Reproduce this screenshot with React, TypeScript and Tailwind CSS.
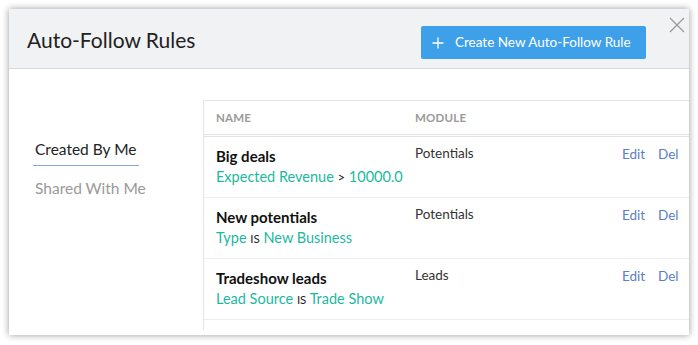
import React from "react";

const rows = [
  { name: "Big deals", field: "Expected Revenue", op: ">", value: "10000.0", module: "Potentials", opSmall: false },
  { name: "New potentials", field: "Type", op: "IS", value: "New Business", module: "Potentials", opSmall: true },
  { name: "Tradeshow leads", field: "Lead Source", op: "IS", value: "Trade Show", module: "Leads", opSmall: true },
];

export default function App() {
  return (
    <div className="w-[698px] h-[345px] bg-white overflow-hidden pt-[9px] pl-[9px]" style={{ fontFamily: "Lato, 'Open Sans', Arial, sans-serif" }}>
      <div className="w-[680px] h-[326px] bg-white shadow-[0_0_7px_rgba(0,0,0,0.4)] flex flex-col overflow-hidden">
        {/* Header */}
        <div className="h-[60px] shrink-0 bg-[#f1f2f4] border-b border-[#d9dadc] flex items-start relative">
          <div className="pl-[18px] pt-[17px] text-[21px] leading-[28px] text-[#222]">Auto-Follow Rules</div>
          <div className="ml-auto mr-[43px] mt-[17px] h-[33px] w-[225px] rounded-[2px] bg-[#3fa0ea] text-white flex items-center pl-[11px] text-[13.5px]">
            <svg width="12" height="12" viewBox="0 0 12 12" className="mr-[11px]">
              <path d="M6 0.5V11.5M0.5 6H11.5" stroke="white" strokeWidth="1.3" />
            </svg>
            <span>Create New Auto-Follow Rule</span>
          </div>
          <svg width="16" height="16" viewBox="0 0 16 16" className="absolute right-[4px] top-[8px]">
            <path d="M1 1L15 15M15 1L1 15" stroke="#9a9a9a" strokeWidth="1.3" />
          </svg>
        </div>
        {/* Body */}
        <div className="flex flex-1 min-h-0">
          <div className="w-[194px] shrink-0 pt-[70px] pl-[24px] flex flex-col items-start">
            <div className="px-[2px] pb-[6px] border-b border-[#86a8dc] text-[15.5px] leading-[20px] text-[#222]">Created By Me</div>
            <div className="pl-[2px] mt-[12px] text-[15.5px] leading-[20px] text-[#999]">Shared With Me</div>
          </div>
          <div className="flex-1 pt-[31px] min-w-0">
            <div className="w-[520px] h-[230px] border-l border-t border-[#e4e4e4] overflow-hidden">
              <div className="grid grid-cols-[211px_207px_36px_1fr] h-[36px] items-center pt-[1px] border-b-[3px] border-double border-[#e2e2e2] text-[11.5px] font-bold text-[#9a9a9a] tracking-[0.2px]">
                <div className="pl-[12px]">NAME</div>
                <div>MODULE</div>
                <div></div>
                <div></div>
              </div>
              {rows.map((r) => (
                <div key={r.name} className="grid grid-cols-[211px_207px_36px_1fr] h-[61px] border-b border-[#eeeeee] whitespace-nowrap">
                  <div className="pl-[12px] pt-[9px] overflow-hidden">
                    <div className="text-[15px] leading-[20px] font-bold text-[#111]">{r.name}</div>
                    <div className="text-[14.5px] leading-[22px] text-[#1cb89f]">
                      {r.field}{" "}
                      <span className={r.opSmall ? "text-[11.5px] text-[#222]" : "text-[13px] text-[#222]"}>{r.op}</span>{" "}
                      {r.value}
                    </div>
                  </div>
                  <div className="pt-[6px] text-[13.5px] leading-[20px] text-[#333]">{r.module}</div>
                  <div className="pt-[7px] text-[13.5px] leading-[20px] text-[#5c80c2]">Edit</div>
                  <div className="pt-[7px] text-[13.5px] leading-[20px] text-[#5c80c2]">Del</div>
                </div>
              ))}
            </div>
          </div>
        </div>
      </div>
    </div>
  );
}
